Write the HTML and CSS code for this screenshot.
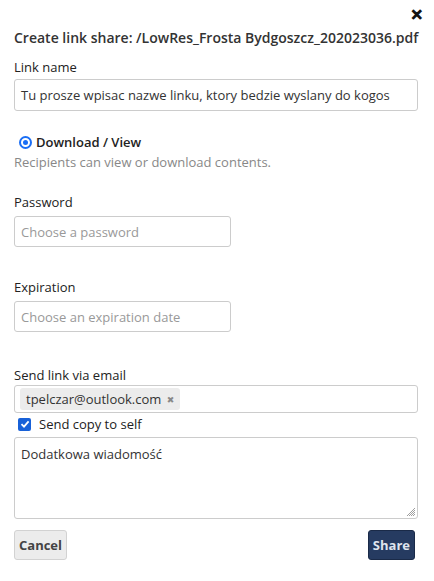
FILE: index.html
```html
<!DOCTYPE html>
<html>
<head>
<meta charset="utf-8">
<link rel="stylesheet" href="styles.css">
</head>
<body>
<div class="dialog">
  <div class="close-row"><span class="close">&#x2715;</span></div>
  <h1 class="title">Create link share: /LowRes_Frosta Bydgoszcz_202023036.pdf</h1>

  <div class="label l-name">Link name</div>
  <div class="input full name-input">Tu prosze wpisac nazwe linku, ktory bedzie wyslany do kogos</div>

  <div class="radio-row">
    <span class="radio"><span class="dot"></span></span>
    <span class="radio-label">Download / View</span>
  </div>
  <div class="desc">Recipients can view or download contents.</div>

  <div class="label l-pass">Password</div>
  <div class="input half placeholder">Choose a password</div>

  <div class="label l-exp">Expiration</div>
  <div class="input half placeholder">Choose an expiration date</div>

  <div class="label l-send">Send link via email</div>
  <div class="input full email-input">
    <span class="chip">tpelczar@outlook.com <span class="chip-x">&#x2716;</span></span>
  </div>

  <div class="check-row">
    <span class="checkbox"><svg width="10" height="10" viewBox="0 0 10 10"><path d="M1.5 5.2 L4 7.6 L8.6 2.4" fill="none" stroke="#fff" stroke-width="1.8"/></svg></span>
    <span>Send copy to self</span>
  </div>

  <div class="textarea">Dodatkowa wiadomość
    <svg class="grip" width="10" height="10" viewBox="0 0 10 10"><path d="M9 1 L1 9 M9 3 L3 9 M9 5 L5 9 M9 7 L7 9" stroke="#888" stroke-width="0.8"/></svg>
  </div>

  <div class="buttons">
    <button class="btn cancel">Cancel</button>
    <button class="btn share">Share</button>
  </div>
</div>
</body>
</html>
```
FILE: styles.css
```css
html, body {
  margin: 0;
  padding: 0;
  background: #fff;
}
body {
  font-family: "Open Sans", "DejaVu Sans", sans-serif;
  font-size: 13px;
  color: #333;
}
.dialog {
  padding: 4px 16px 0 14px;
  display: flex;
  flex-direction: column;
}
.close-row {
  display: flex;
  justify-content: flex-end;
  height: 20px;
  line-height: 20px;
}
.close {
  font-size: 15px;
  font-weight: 900;
  color: #111;
  margin-right: -5px;
  -webkit-text-stroke: 1.2px #111;
}
.title {
  margin: 4px 0 0 0;
  font-size: 14px;
  font-weight: 600;
  line-height: 20px;
  white-space: nowrap;
  color: #333;
}
.label {
  line-height: 18px;
  color: #222;
}
.l-name { margin-top: 10px; }
.l-pass { margin-top: 22px; }
.l-exp { margin-top: 31px; }
.l-send { margin-top: 34px; }
.input {
  box-sizing: border-box;
  border: 1px solid #ccc;
  border-radius: 3px;
  padding: 0 6px;
  display: flex;
  align-items: center;
  white-space: nowrap;
  overflow: hidden;
  color: #333;
}
.full { width: 404px; }
.half { width: 217px; height: 31px; margin-top: 5px; color: #999; }
.name-input { height: 32px; margin-top: 3px; }
.radio-row {
  margin-top: 22px;
  margin-left: 5px;
  display: flex;
  align-items: center;
  line-height: 18px;
}
.radio {
  width: 13px;
  height: 13px;
  box-sizing: border-box;
  border-radius: 50%;
  border: 2.5px solid #1a6ef5;
  display: flex;
  align-items: center;
  justify-content: center;
  margin-right: 4px;
}
.dot {
  width: 5px;
  height: 5px;
  border-radius: 50%;
  background: #1a6ef5;
}
.radio-label {
  font-weight: 600;
  color: #222;
}
.desc {
  margin-top: 2px;
  line-height: 18px;
  color: #888;
}
.email-input {
  height: 28px;
  margin-top: 1px;
  padding: 0 5px;
}
.chip {
  background: #ececec;
  border-radius: 3px;
  height: 22px;
  line-height: 22px;
  padding: 0 6px 0 6px;
  color: #333;
}
.chip-x {
  font-size: 9px;
  color: #888;
  margin-left: 2px;
  vertical-align: 1px;
}
.check-row {
  display: flex;
  align-items: center;
  margin-top: 2px;
  margin-left: 4px;
  line-height: 18px;
  color: #222;
}
.checkbox {
  width: 13px;
  height: 13px;
  border-radius: 2px;
  background: #1861d8;
  display: flex;
  align-items: center;
  justify-content: center;
  margin-right: 8px;
}
.textarea {
  position: relative;
  box-sizing: border-box;
  width: 404px;
  height: 82px;
  margin-top: 4px;
  border: 1px solid #ccc;
  border-radius: 3px;
  padding: 7px 6px;
  line-height: 18px;
  color: #333;
}
.grip {
  position: absolute;
  right: 1px;
  bottom: 1px;
}
.buttons {
  display: flex;
  justify-content: space-between;
  margin-top: 11px;
  padding-right: 3px;
}
.btn {
  font-family: "Open Sans", "DejaVu Sans", sans-serif;
  font-size: 13px;
  font-weight: 700;
  height: 30px;
  border-radius: 3px;
  padding: 0 4px;
  cursor: pointer;
}
.cancel {
  background: #ececec;
  border: 1px solid #d2d2d2;
  color: #444;
}
.share {
  background: #263b61;
  border: 1px solid #1a2a48;
  color: #dfe4ee;
}
```
